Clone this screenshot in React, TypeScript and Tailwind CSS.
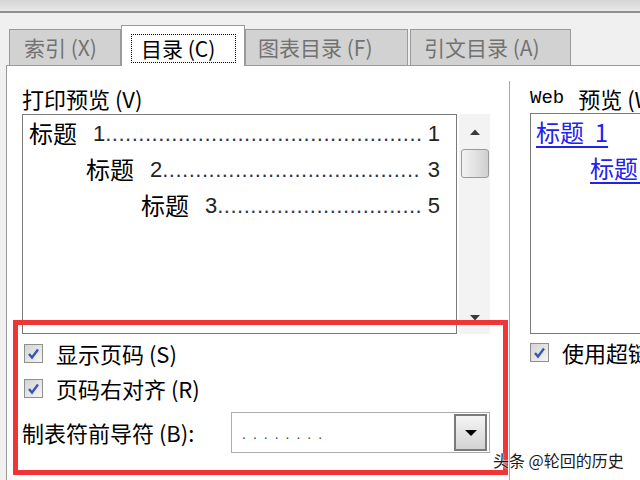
import React from "react";

function Check() {
  return (
    <span className="w-[19px] h-[19px] shrink-0 border border-[#8e8f8f] bg-linear-to-br from-[#d4d4d4] to-[#f5f5f5] flex items-center justify-center">
      <svg width="13" height="13" viewBox="0 0 13 13">
        <path d="M2 7 L5 10.5 L11 2.5" fill="none" stroke="#3b56b2" strokeWidth="2.4" />
      </svg>
    </span>
  );
}

function TocRow({ indent, num, page, dots }: { indent: string; num: string; page: string; dots: number }) {
  return (
    <div className={`h-[36px] flex items-center pr-[16px] ${indent}`}>
      <span className="text-[24px] leading-[30px]">标题</span>
      <span className="ml-[16px] text-[22px] font-['Liberation_Sans',sans-serif] text-[#222]">{num}</span>
      <span className="flex-1 min-w-0 overflow-hidden whitespace-nowrap text-[22px] font-['Liberation_Sans',sans-serif] text-[#2c3550] tracking-[0.5px]">
        {".".repeat(dots)}
      </span>
      <span className="ml-[6px] text-[22px] font-['Liberation_Sans',sans-serif] text-[#222]">{page}</span>
    </div>
  );
}

export default function App() {
  return (
    <div className="w-[640px] h-[480px] overflow-hidden relative bg-[#f0f0f0] text-black font-['Noto_Sans_CJK_SC','Noto_Sans',sans-serif]">
      <div className="h-[11px] bg-linear-to-b from-[#d6d6d6] to-[#e8e8e8]" />
      <div className="h-[2px] bg-[#8f8f8f]" />

      {/* tabs */}
      <div className="h-[52px] flex items-end pl-[9px]">
        <div className="w-[112px] h-[36px] border border-b-0 border-[#9a9a9a] bg-[#d2d2d2] text-[#727272] text-[21px] leading-[34px] pl-[14px] whitespace-nowrap">
          索引 (X)
        </div>
        <div className="relative z-10 -mb-[1px] w-[124px] h-[41px] border border-b-0 border-[#9a9a9a] bg-white flex items-start pt-[8px] pl-[9px]">
          <div className="w-[105px] h-[29px] border border-dotted border-black text-[21px] leading-[26px] pl-[9px] whitespace-nowrap">
            目录 (C)
          </div>
        </div>
        <div className="w-[163px] h-[36px] border border-b-0 border-[#9a9a9a] bg-[#d2d2d2] text-[#727272] text-[21px] leading-[34px] pl-[12px] whitespace-nowrap">
          图表目录 (F)
        </div>
        <div className="ml-[2px] w-[161px] h-[36px] border border-b-0 border-[#9a9a9a] bg-[#d2d2d2] text-[#727272] text-[21px] leading-[34px] pl-[13px] whitespace-nowrap">
          引文目录 (A)
        </div>
      </div>

      {/* panel */}
      <div className="ml-[6px] h-[415px] bg-white border-l border-t border-[#9a9a9a] flex">
        {/* left column */}
        <div className="w-[483px] pl-[15px] pt-[18px] flex flex-col">
          <div className="h-[28px] leading-[28px] text-[22px] mb-[2px] whitespace-nowrap">打印预览 (V)</div>
          <div className="h-[220px] flex">
            <div className="w-[435px] border border-[#7a7a7a] pl-[6px]">
              <TocRow indent="" num="1" page="1" dots={48} />
              <TocRow indent="pl-[57px]" num="2" page="3" dots={40} />
              <TocRow indent="pl-[112px]" num="3" page="5" dots={31} />
            </div>
            <div className="ml-[2px] w-[31px] bg-[#f3f3f3] flex flex-col items-center">
              <svg width="12" height="8" viewBox="0 0 12 8" className="mt-[14px]">
                <path d="M1 7 L6 1.5 L11 7 Z" fill="#3a3a3a" />
              </svg>
              <div className="mt-[13px] w-[28px] h-[29px] rounded-[3px] border border-[#9a9a9a] bg-linear-to-r from-[#f2f2f2] via-[#e2e2e2] to-[#cfcfcf]" />
              <div className="flex-1" />
              <svg width="12" height="8" viewBox="0 0 12 8" className="mb-[12px]">
                <path d="M1 1 L6 6.5 L11 1 Z" fill="#3a3a3a" />
              </svg>
            </div>
          </div>
          <div className="mt-[2px] h-[35px] flex items-center gap-[13px] pl-[2px] text-[22px] whitespace-nowrap">
            <Check />
            <span>显示页码 (S)</span>
          </div>
          <div className="h-[35px] flex items-center gap-[13px] pl-[2px] text-[22px] whitespace-nowrap">
            <Check />
            <span>页码右对齐 (R)</span>
          </div>
          <div className="mt-[6px] h-[41px] flex items-center">
            <span className="w-[209px] text-[22px] whitespace-nowrap">制表符前导符 (B):</span>
            <div className="w-[259px] h-[41px] border border-[#adadad] bg-white flex items-center pl-[10px] pr-[2px]">
              <span className="flex-1 text-[14px] tracking-[7px] text-[#444] font-['Liberation_Sans',sans-serif] pt-[4px]">........</span>
              <div className="w-[33px] h-[37px] border-2 border-[#7b7b7b] bg-linear-to-b from-[#f4f4f4] to-[#d4d4d4] flex items-center justify-center">
                <svg width="14" height="8" viewBox="0 0 14 8">
                  <path d="M1 1 L7 7 L13 1 Z" fill="#000" />
                </svg>
              </div>
            </div>
          </div>
        </div>

        {/* separator */}
        <div className="mt-[15px] ml-[19px] w-[1px] bg-[#a8a8a8]" />

        {/* right column */}
        <div className="pl-[20px] pt-[18px] flex flex-col flex-1 min-w-0">
          <div className="h-[28px] leading-[28px] text-[22px] mb-[1px] whitespace-nowrap flex items-center">
            <span className="font-['Liberation_Mono',monospace] text-[19px] mr-[14px]">Web</span>
            <span>预览 (W)</span>
          </div>
          <div className="h-[221px] w-[130px] border border-r-0 border-[#7a7a7a] pl-[5px] text-[#2222ee] text-[24px] whitespace-nowrap">
            <div className="h-[36px] flex items-center">
              <span className="underline underline-offset-[4px]">标题 &nbsp;1</span>
            </div>
            <div className="h-[36px] flex items-center pl-[54px]">
              <span className="underline underline-offset-[4px]">标题 &nbsp;2</span>
            </div>
          </div>
          <div className="mt-[1px] h-[35px] flex items-center gap-[13px] text-[22px] whitespace-nowrap">
            <Check />
            <span>使用超链接而不使用页码 (H)</span>
          </div>
        </div>
      </div>

      {/* red annotation frame */}
      <div className="absolute left-[13px] top-[320px] w-[495px] h-[155px] border-[5px] border-[#ef3535]" />

      {/* watermark */}
      <div className="absolute left-[493px] top-[449px] text-[16px] leading-[22px] text-[#1a1a1a] whitespace-nowrap [text-shadow:0_0_2px_#fff,0_0_2px_#fff]">
        头条 @轮回的历史
      </div>
    </div>
  );
}
